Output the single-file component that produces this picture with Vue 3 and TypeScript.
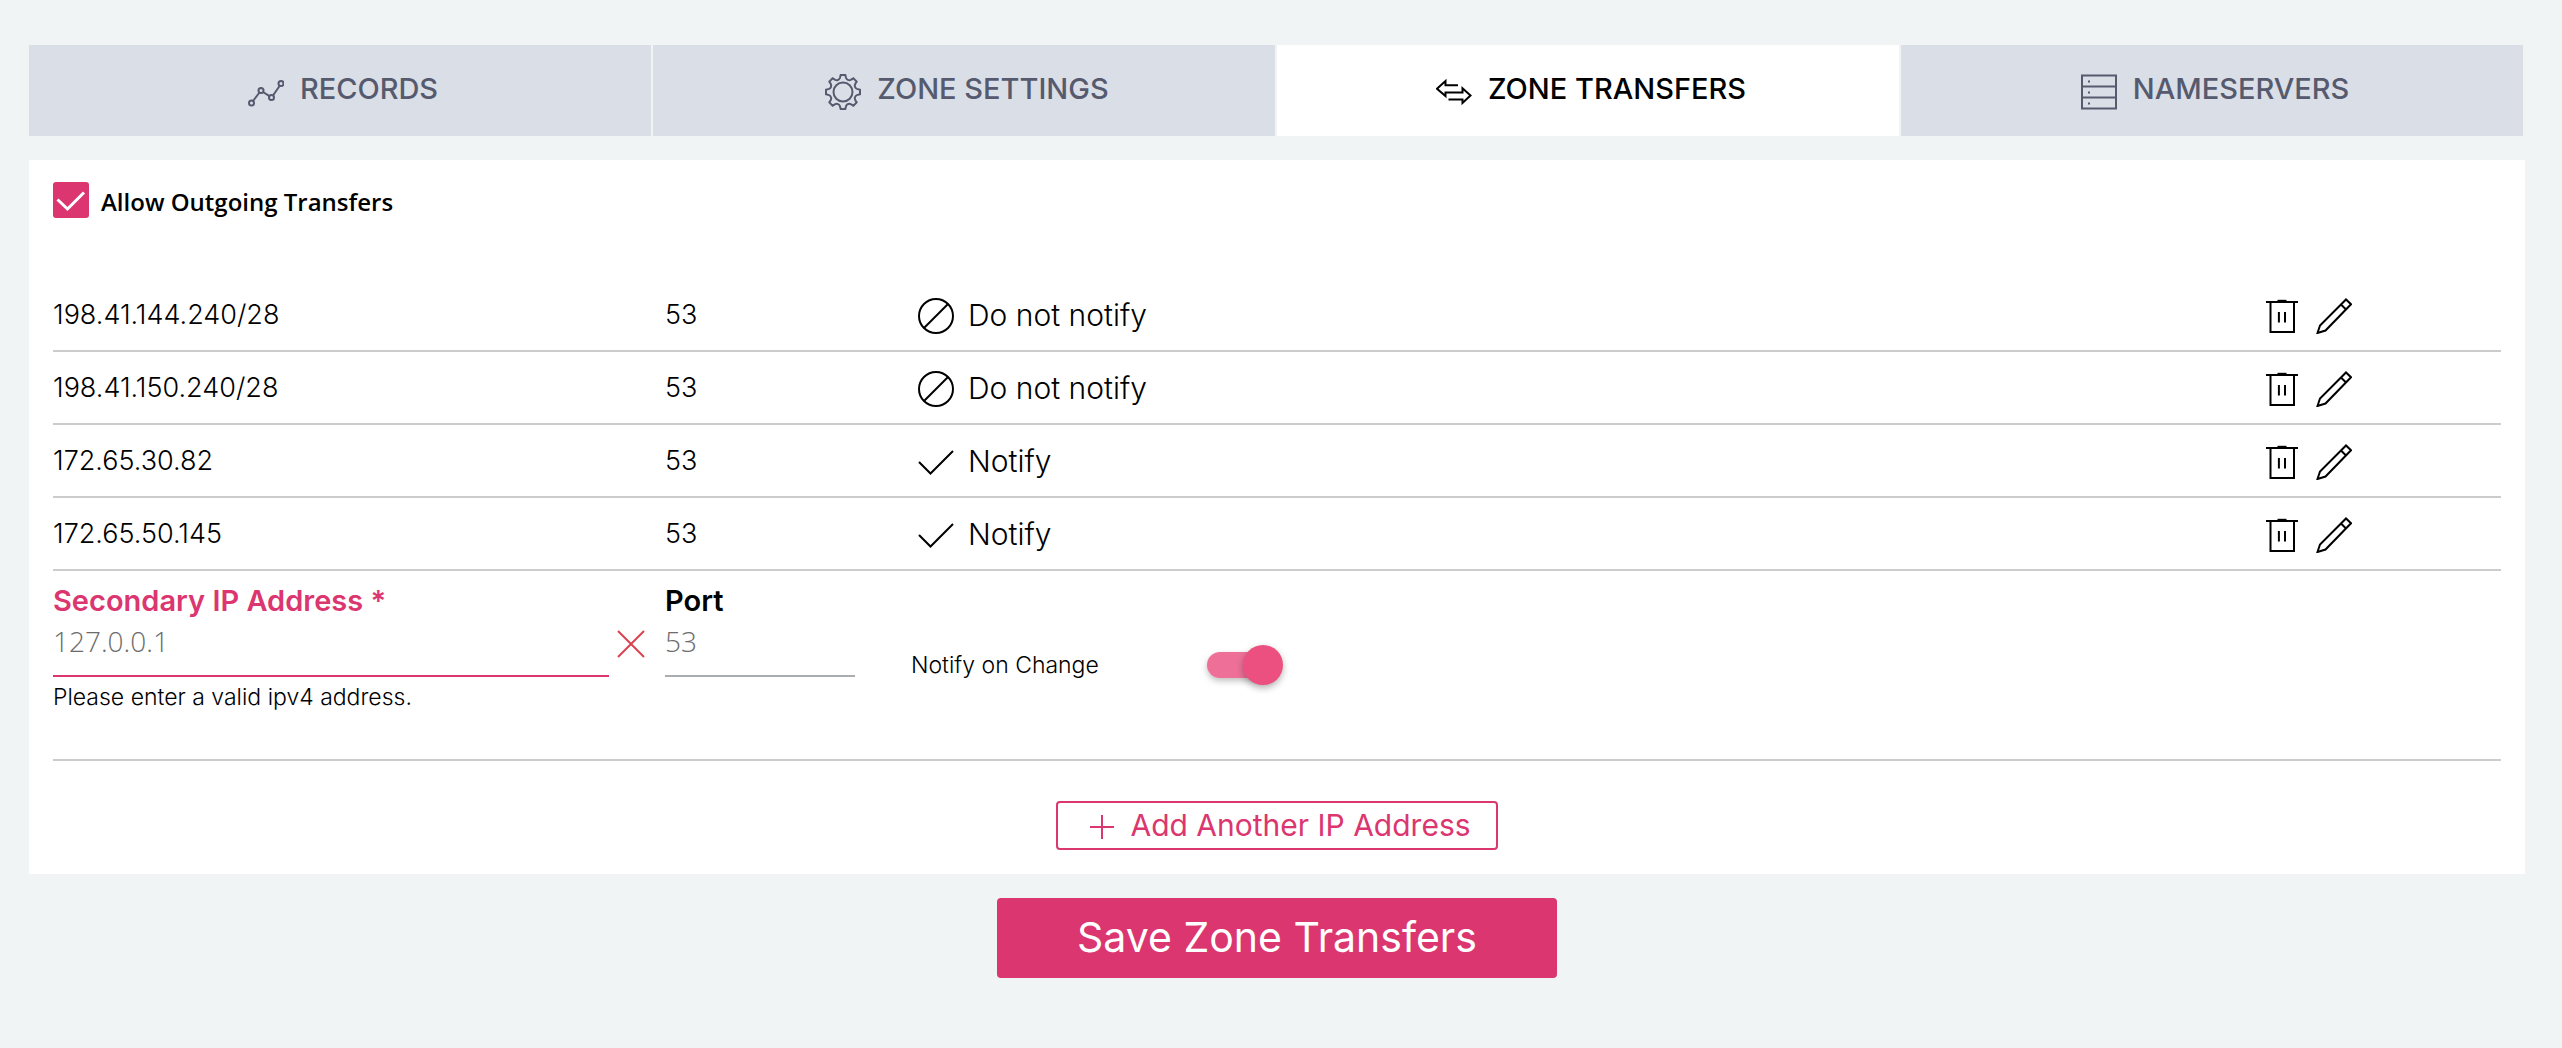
<script setup lang="ts">
import { ref } from 'vue'

type IconName = 'chart' | 'gear' | 'transfer' | 'server'

interface Tab {
  id: string
  label: string
  icon: IconName
}

interface Transfer {
  ip: string
  port: number
  notify: boolean
}

const tabs: Tab[] = [
  { id: 'records', label: 'RECORDS', icon: 'chart' },
  { id: 'settings', label: 'ZONE SETTINGS', icon: 'gear' },
  { id: 'transfers', label: 'ZONE TRANSFERS', icon: 'transfer' },
  { id: 'nameservers', label: 'NAMESERVERS', icon: 'server' },
]

const activeTab = ref('transfers')
const allowOutgoing = ref(true)
const notifyOnChange = ref(true)
const address = ref('')
const port = ref('')

const transfers = ref<Transfer[]>([
  { ip: '198.41.144.240/28', port: 53, notify: false },
  { ip: '198.41.150.240/28', port: 53, notify: false },
  { ip: '172.65.30.82', port: 53, notify: true },
  { ip: '172.65.50.145', port: 53, notify: true },
])

function removeTransfer(index: number) {
  transfers.value.splice(index, 1)
}

// Outline of an eight-toothed gear centred on (18, 18).
function gearOutline(): string {
  const at = (x: number, y: number, turn: number) => {
    const a = (turn * Math.PI) / 4
    const px = 18 + x * Math.cos(a) - y * Math.sin(a)
    const py = 18 + x * Math.sin(a) + y * Math.cos(a)
    return `${px.toFixed(2)} ${py.toFixed(2)}`
  }
  let d = ''
  for (let i = 0; i < 8; i++) {
    d += `${i === 0 ? 'M' : 'L'}${at(-2.3, -17, i)}L${at(2.3, -17, i)}`
    d += `L${at(3.1, -14, i)}`
    d += `Q${at(3.6, -12.6, i)} ${at(4.9, -12.1, i)}`
    d += `Q${at(-3.6, -12.6, i + 1)} ${at(-3.1, -14, i + 1)}`
  }
  return d + 'Z'
}
const gearPath = gearOutline()
</script>

<template>
  <main class="page">
    <nav class="tabs" aria-label="Zone sections">
      <button
        v-for="tab in tabs"
        :key="tab.id"
        type="button"
        class="tab"
        :class="{ active: tab.id === activeTab }"
        @click="activeTab = tab.id"
      >
        <svg class="icon" viewBox="0 0 36 36" aria-hidden="true">
          <g v-if="tab.icon === 'chart'">
            <circle cx="3.5" cy="29" r="2.5" />
            <circle cx="13" cy="16.5" r="2.5" />
            <circle cx="23.5" cy="23.5" r="2.5" />
            <circle cx="33" cy="9.5" r="2.5" />
            <path d="M5 27 11.5 18.5M15 18 21.5 22.2M25 21.5 31.7 11.7" />
          </g>
          <g v-else-if="tab.icon === 'gear'">
            <path :d="gearPath" />
            <circle cx="18" cy="18" r="9.5" />
          </g>
          <g v-else-if="tab.icon === 'transfer'">
            <path d="M22 11.300H9.500V7L1 14.700 9.500 22V18.500H26.500V14.200L34.500 21.500 26.500 29V25.500H12.500" />
          </g>
          <g v-else>
            <path d="M1 1.500H35V34.500H1ZM1 12.500H35M1 23.500H35" />
            <path d="M7 7.500h2M7 18.500h2M7 29.500h2" />
          </g>
        </svg>
        <span>{{ tab.label }}</span>
      </button>
    </nav>

    <form @submit.prevent>
      <section class="card">
        <label class="allow">
          <span class="checkbox">
            <input v-model="allowOutgoing" type="checkbox" />
            <svg v-if="allowOutgoing" viewBox="0 0 36 36" aria-hidden="true">
              <path d="M4.500 17.500 14.500 27 31 10.500" />
            </svg>
          </span>
          <span>Allow Outgoing Transfers</span>
        </label>

        <table class="transfers" aria-label="Secondary addresses">
          <colgroup>
            <col class="col-ip" />
            <col class="col-port" />
            <col />
            <col class="col-actions" />
          </colgroup>
          <tbody>
            <tr v-for="(row, index) in transfers" :key="row.ip">
              <td>{{ row.ip }}</td>
              <td>{{ row.port }}</td>
              <td>
                <span class="notify">
                  <svg class="icon" viewBox="0 0 36 36" aria-hidden="true">
                    <path v-if="row.notify" d="M1 18 12.500 29.500 35 7" />
                    <g v-else>
                      <circle cx="18" cy="18" r="17" />
                      <path d="M6 30 30 6" />
                    </g>
                  </svg>
                  <span>{{ row.notify ? 'Notify' : 'Do not notify' }}</span>
                </span>
              </td>
              <td>
                <span class="actions">
                  <button type="button" :aria-label="`Delete ${row.ip}`" @click="removeTransfer(index)">
                    <svg class="icon" viewBox="0 0 36 36" aria-hidden="true">
                      <path d="M2 4H34M6.500 4V34H30V4M14.900 14V24.500M21 14V24.500" />
                      <path d="M13.500 2.800H22.500" />
                    </svg>
                  </button>
                  <button type="button" :aria-label="`Edit ${row.ip}`">
                    <svg class="icon" viewBox="0 0 36 36" aria-hidden="true">
                      <path d="M1.500 35 4 27.500 30 1.500 35 6.300 9.500 32.500ZM25 6.500 30 11.500" />
                    </svg>
                  </button>
                </span>
              </td>
            </tr>
          </tbody>
        </table>

        <div class="entry">
          <div class="address">
            <label class="caption invalid" for="address">Secondary IP Address *</label>
            <div class="line">
              <input id="address" v-model="address" class="invalid" type="text" placeholder="127.0.0.1" aria-describedby="address-error" />
              <button type="button" class="clear" aria-label="Clear address" @click="address = ''">
                <svg viewBox="0 0 28 28" aria-hidden="true"><path d="M1 1 27 27M27 1 1 27" /></svg>
              </button>
            </div>
            <p id="address-error" class="small">Please enter a valid ipv4 address.</p>
          </div>
          <div class="port">
            <label class="caption" for="port">Port</label>
            <div class="line">
              <input id="port" v-model="port" type="text" placeholder="53" />
            </div>
          </div>
          <label class="change small">
            <span>Notify on Change</span>
            <input v-model="notifyOnChange" class="switch" type="checkbox" role="switch" />
          </label>
        </div>

        <button type="button" class="add">
          <svg viewBox="0 0 24 24" aria-hidden="true"><path d="M0 12H24M12 0V24" /></svg>
          <span>Add Another IP Address</span>
        </button>
      </section>

      <button type="submit" class="save">Save Zone Transfers</button>
    </form>
  </main>
</template>

<style>
body {
  margin: 0;
  background: #f0f4f5;
}
</style>

<style scoped>
.page {
  padding: 45px 37px 70px 29px;
  font-family: Inter, sans-serif;
  font-size: 29px;
  line-height: 36px;
  color: #000;
}

button {
  margin: 0;
  padding: 0;
  border: 0;
  background: none;
  font: inherit;
  color: inherit;
  cursor: pointer;
}

svg {
  display: block;
  flex: none;
  fill: none;
  stroke: currentColor;
  stroke-width: 2;
}

.icon {
  width: 36px;
  height: 36px;
}

.tabs {
  display: grid;
  grid-template-columns: repeat(4, 1fr);
  gap: 2px;
  margin-right: 2px;
}

.tab {
  display: flex;
  align-items: center;
  justify-content: center;
  gap: 16px;
  height: 91px;
  padding: 0 0 4px 6px;
  background: #dadee6;
  color: #565a6e;
  font-weight: 500;
}

.tab .icon {
  margin-top: 6px;
}

.tab.active {
  background: #fff;
  color: #000;
}

.card {
  margin-top: 24px;
  padding: 22px 24px 24px;
  background: #fff;
}

.allow {
  display: flex;
  gap: 12px;
  width: fit-content;
  font-family: 'Open Sans', sans-serif;
  font-size: 24px;
  line-height: 40px;
  font-weight: 600;
}

.checkbox {
  display: grid;
  width: 36px;
  height: 36px;
}

.checkbox input,
.checkbox svg {
  grid-area: 1 / 1;
  width: 36px;
  height: 36px;
}

.checkbox input {
  appearance: none;
  margin: 0;
  border: 2px solid #db366f;
  border-radius: 3px;
}

.checkbox input:checked {
  background: #db366f;
}

.checkbox svg {
  stroke: #fff;
  stroke-width: 3;
  pointer-events: none;
}

.transfers {
  width: 100%;
  margin-top: 57px;
  border-collapse: collapse;
  table-layout: fixed;
}

.col-ip {
  width: 25%;
}

.col-port {
  width: 253px;
}

.col-actions {
  width: 237px;
}

.transfers td {
  height: 71px;
  padding: 0;
  border-bottom: 2px solid #ccc;
  font-size: 27px;
  font-weight: 300;
}

.transfers .icon {
  margin-top: 2px;
}

.notify {
  display: flex;
  align-items: center;
  gap: 14px;
  font-size: 30px;
}

.actions {
  display: flex;
  gap: 16px;
}

.entry {
  display: flex;
  height: 188px;
  border-bottom: 2px solid #ccc;
}

.address {
  width: 25%;
}

.port {
  width: 190px;
}

.caption {
  display: block;
  padding-top: 12px;
  font-weight: 600;
}

.caption.invalid {
  color: #db366f;
}

.line {
  display: flex;
  gap: 8px;
}

.line input {
  flex: 1;
  box-sizing: border-box;
  min-width: 0;
  height: 58px;
  padding: 0 0 12px;
  border: 0;
  border-bottom: 2px solid #a9adb0;
  background: none;
  font: 300 28px 'Open Sans', sans-serif;
  outline: none;
}

.line input::placeholder {
  color: #6c6c6c;
  opacity: 1;
}

.line input.invalid {
  border-color: #db366f;
}

.clear {
  width: 28px;
  height: 28px;
  margin: 11px 20px 0 0;
  color: #d9434f;
}

.clear svg {
  width: 28px;
  height: 28px;
}

.small {
  margin: 0;
  font-size: 23px;
  line-height: 28px;
  font-weight: 300;
}

.address .small {
  margin-top: 6px;
}

.change {
  display: flex;
  align-items: center;
  gap: 108px;
  height: 56px;
  margin: 66px 0 0 56px;
}

.switch {
  appearance: none;
  display: flex;
  align-items: center;
  width: 68px;
  height: 26px;
  margin: 0;
  border-radius: 13px;
  background: #ee7099;
  box-shadow: 0 3px 6px rgba(0, 0, 0, 0.25);
}

.switch::before {
  content: '';
  width: 40px;
  height: 40px;
  margin: 0 -8px;
  border-radius: 50%;
  background: #ec5080;
  box-shadow: 0 3px 7px rgba(0, 0, 0, 0.3);
}

.switch:checked {
  justify-content: flex-end;
}

.add {
  display: flex;
  align-items: center;
  gap: 16px;
  margin: 40px auto 0;
  padding: 4px 25px 5px 32px;
  border: 2px solid #db366f;
  border-radius: 4px;
  color: #db366f;
  font-size: 30px;
}

.add svg {
  width: 24px;
  height: 24px;
  margin-top: 3px;
}

.save {
  display: block;
  margin: 24px auto 0;
  padding: 15px 80px 17px;
  border-radius: 4px;
  background: #db366f;
  color: #fff;
  font-size: 41px;
  line-height: 48px;
}
</style>
